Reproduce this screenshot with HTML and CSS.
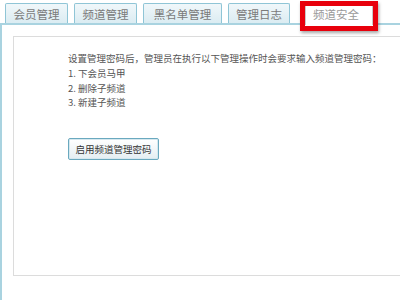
FILE: index.html
```html
<!DOCTYPE html>
<html lang="zh-CN">
<head>
<meta charset="utf-8">
<link rel="stylesheet" href="styles.css">
</head>
<body>
<div class="page">
  <div class="tabs">
    <div class="tab t1">会员管理</div>
    <div class="tab t2">频道管理</div>
    <div class="tab t3">黑名单管理</div>
    <div class="tab t4">管理日志</div>
    <div class="tab active">频道安全<span class="mark"></span></div>
  </div>
  <div class="body">
    <div class="panel">
      <p class="intro">设置管理密码后，管理员在执行以下管理操作时会要求输入频道管理密码：</p>
      <ol class="list">
        <li>1. 下会员马甲</li>
        <li>2. 删除子频道</li>
        <li>3. 新建子频道</li>
      </ol>
      <button class="btn">启用频道管理密码</button>
    </div>
  </div>
</div>
</body>
</html>
```
FILE: styles.css
```css
html, body {
  margin: 0;
  padding: 0;
  background: #fff;
}
body {
  width: 400px;
  height: 300px;
  overflow: hidden;
  font-family: "Noto Sans CJK SC", "Liberation Sans", sans-serif;
}
.page {
  display: flex;
  flex-direction: column;
  height: 300px;
}
.tabs {
  display: flex;
  align-items: flex-end;
  gap: 6px;
  padding: 2px 0 0 5px;
  height: 21px;
  border-bottom: 2px solid #a9d3e0;
  background: #fff;
}
.tab {
  position: relative;
  height: 20px;
  line-height: 20px;
  box-sizing: border-box;
  border: 1px solid #8fc5d6;
  border-bottom: none;
  background: linear-gradient(#f0f7fa, #dbecf2);
  color: #7a7a7a;
  font-size: 11.5px;
  text-align: center;
  border-radius: 2px 2px 0 0;
}
.t1 { width: 63px; }
.t2 { width: 63px; }
.t3 { width: 79px; }
.t4 { width: 62px; }
.tab.active {
  width: 68px;
  margin-left: 9px;
  background: #fff;
  border-color: #c8c8c8;
  color: #9a9a9a;
  text-align: left;
  padding-left: 7px;
  height: 22px;
  margin-bottom: -2px;
}
.mark {
  position: absolute;
  left: -6px;
  top: -3px;
  width: 78px;
  height: 30px;
  box-sizing: border-box;
  border: 5px solid #e8000c;
  box-shadow: 1px 2px 3px rgba(0,0,0,0.35);
}
.body {
  flex: 1;
  border-left: 2px solid #a9d3e0;
  padding: 11px 0 24px 11px;
  display: flex;
}
.panel {
  flex: 1;
  border: 1px solid #dcdcdc;
  border-right: none;
  padding: 14px 0 0 54px;
  color: #555;
  font-size: 9.5px;
}
.intro {
  margin: 0;
  line-height: 15px;
}
.list {
  list-style: none;
  margin: 0;
  padding: 0;
  line-height: 14.5px;
}
.btn {
  margin-top: 28px;
  height: 22px;
  width: 91px;
  padding: 0;
  border: 1px solid #6aa9bf;
  border-radius: 2px;
  background: linear-gradient(#ffffff, #e4eef2);
  box-shadow: inset 0 0 0 1px #d6e8ef;
  color: #333;
  font-family: "Noto Sans CJK SC", "Liberation Sans", sans-serif;
  font-size: 9.5px;
}
```
